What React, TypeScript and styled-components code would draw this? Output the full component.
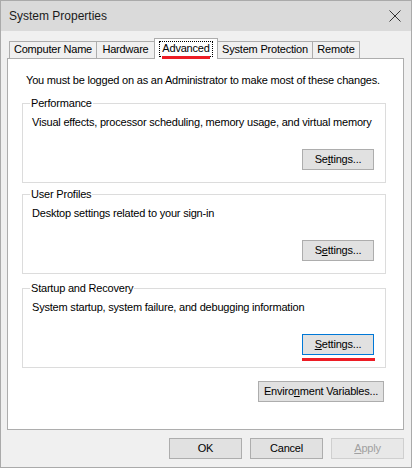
import React from "react";
import styled, { createGlobalStyle, css } from "styled-components";

const GlobalStyle = createGlobalStyle`
  html, body { margin: 0; padding: 0; background: #ffffff; }
  body {
    font-family: "Liberation Sans", Arial, sans-serif;
    font-size: 11px;
    letter-spacing: -0.2px;
    color: #000;
  }
  * { box-sizing: border-box; }
`;

const Window = styled.div`
  width: 412px;
  height: 468px;
  border: 1px solid #aaaaaa;
  background: #f0f0f0;
  display: flex;
  flex-direction: column;
`;

const TitleBar = styled.div`
  height: 30px;
  background: #dadada;
  display: flex;
  align-items: center;
  justify-content: space-between;
  padding: 0 10px 0 8px;
`;

const Title = styled.span`
  font-size: 12px;
  letter-spacing: 0;
  line-height: 15px;
  color: #1a1a1a;
`;

const CloseIcon = styled.svg`
  width: 12px;
  height: 12px;
  display: block;
`;

const Body = styled.div`
  flex: 1;
  display: flex;
  flex-direction: column;
  padding: 7px 7px 8px 6px;
`;

const TabRow = styled.div`
  display: flex;
  align-items: flex-end;
  padding-left: 2px;
  height: 20px;
`;

const Tab = styled.div<{ $w: number; $active?: boolean }>`
  width: ${(p) => p.$w}px;
  height: 17px;
  border: 1px solid #adadad;
  border-bottom: none;
  background: #f0f0f0;
  display: flex;
  justify-content: center;
  line-height: 15px;
  white-space: nowrap;
  & + & { margin-left: -1px; }
  ${(p) =>
    p.$active &&
    css`
      height: 21px;
      margin-bottom: -1px;
      background: #ffffff;
      position: relative;
      z-index: 1;
      padding-top: 2px;
    `}
`;

const FocusLabel = styled.span`
  height: 16px;
  padding: 0 3px;
  outline: 1px dotted #000;
  outline-offset: -1px;
  line-height: 15px;
  position: relative;
  &::after {
    content: "";
    position: absolute;
    left: 3px;
    right: 3px;
    bottom: -2px;
    height: 3px;
    background: #ed1c24;
  }
`;

const Panel = styled.div`
  flex: 1;
  border: 1px solid #adadad;
  background: #ffffff;
  display: flex;
  flex-direction: column;
  padding: 14px 17px 0 14px;
`;

const Intro = styled.div`
  margin-left: 4px;
  line-height: 15px;
  white-space: nowrap;
`;

const Group = styled.fieldset<{ $mt: number }>`
  margin: ${(p) => p.$mt}px 0 0 0;
  border: 1px solid #dcdcdc;
  padding: 0 11px 12px 9px;
  min-width: 0;
`;

const Legend = styled.legend`
  padding: 0 1px;
  margin-left: -2px;
  line-height: 15px;
`;

const Desc = styled.div`
  margin-top: 4px;
  line-height: 15px;
  white-space: nowrap;
`;

const ButtonRow = styled.div<{ $mt: number; $mr?: number }>`
  display: flex;
  justify-content: flex-end;
  gap: 8px;
  margin-top: ${(p) => p.$mt}px;
  margin-right: ${(p) => p.$mr ?? 0}px;
`;

const Button = styled.button<{ $w: number; $focused?: boolean; $marked?: boolean }>`
  width: ${(p) => p.$w}px;
  height: 21px;
  padding: 0;
  border: 1px solid ${(p) => (p.$focused ? "#0078d7" : "#adadad")};
  background: #e1e1e1;
  font-family: inherit;
  font-size: 11px;
  letter-spacing: -0.2px;
  line-height: 19px;
  color: #000;
  text-align: center;
  white-space: nowrap;
  position: relative;
  &:disabled {
    background: #e8e8e8;
    border-color: #cfcfcf;
    color: #a0a0a0;
  }
  ${(p) =>
    p.$marked &&
    css`
      &::after {
        content: "";
        position: absolute;
        left: -1px;
        right: -2px;
        bottom: -7px;
        height: 3px;
        background: #ed1c24;
      }
    `}
`;

const Footer = styled.div`
  display: flex;
  justify-content: flex-end;
  gap: 8px;
  margin-top: 8px;
`;

const tabs = [
  { label: "Computer Name", w: 88 },
  { label: "Hardware", w: 59 },
  { label: "Advanced", w: 64, active: true },
  { label: "System Protection", w: 96 },
  { label: "Remote", w: 48 },
];

export default function App() {
  return (
    <>
      <GlobalStyle />
      <Window>
        <TitleBar>
          <Title>System Properties</Title>
          <CloseIcon viewBox="0 0 12 12">
            <path d="M0.5 0.5 L11.5 11.5 M11.5 0.5 L0.5 11.5" stroke="#333" strokeWidth="1" fill="none" />
          </CloseIcon>
        </TitleBar>
        <Body>
          <TabRow>
            {tabs.map((t) => (
              <Tab key={t.label} $w={t.w} $active={t.active}>
                {t.active ? <FocusLabel>{t.label}</FocusLabel> : t.label}
              </Tab>
            ))}
          </TabRow>
          <Panel>
            <Intro>You must be logged on as an Administrator to make most of these changes.</Intro>
            <Group $mt={8}>
              <Legend>Performance</Legend>
              <Desc>Visual effects, processor scheduling, memory usage, and virtual memory</Desc>
              <ButtonRow $mt={19}>
                <Button $w={72}>
                  Se<u>t</u>tings...
                </Button>
              </ButtonRow>
            </Group>
            <Group $mt={4}>
              <Legend>User Profiles</Legend>
              <Desc>Desktop settings related to your sign-in</Desc>
              <ButtonRow $mt={19}>
                <Button $w={72}>
                  S<u>e</u>ttings...
                </Button>
              </ButtonRow>
            </Group>
            <Group $mt={7}>
              <Legend>Startup and Recovery</Legend>
              <Desc>System startup, system failure, and debugging information</Desc>
              <ButtonRow $mt={19}>
                <Button $w={72} $focused $marked>
                  <u>S</u>ettings...
                </Button>
              </ButtonRow>
            </Group>
            <ButtonRow $mt={13} $mr={2}>
              <Button $w={126}>
                Enviro<u>n</u>ment Variables...
              </Button>
            </ButtonRow>
          </Panel>
          <Footer>
            <Button $w={73}>OK</Button>
            <Button $w={73}>Cancel</Button>
            <Button $w={73} disabled>
              <u>A</u>pply
            </Button>
          </Footer>
        </Body>
      </Window>
    </>
  );
}
